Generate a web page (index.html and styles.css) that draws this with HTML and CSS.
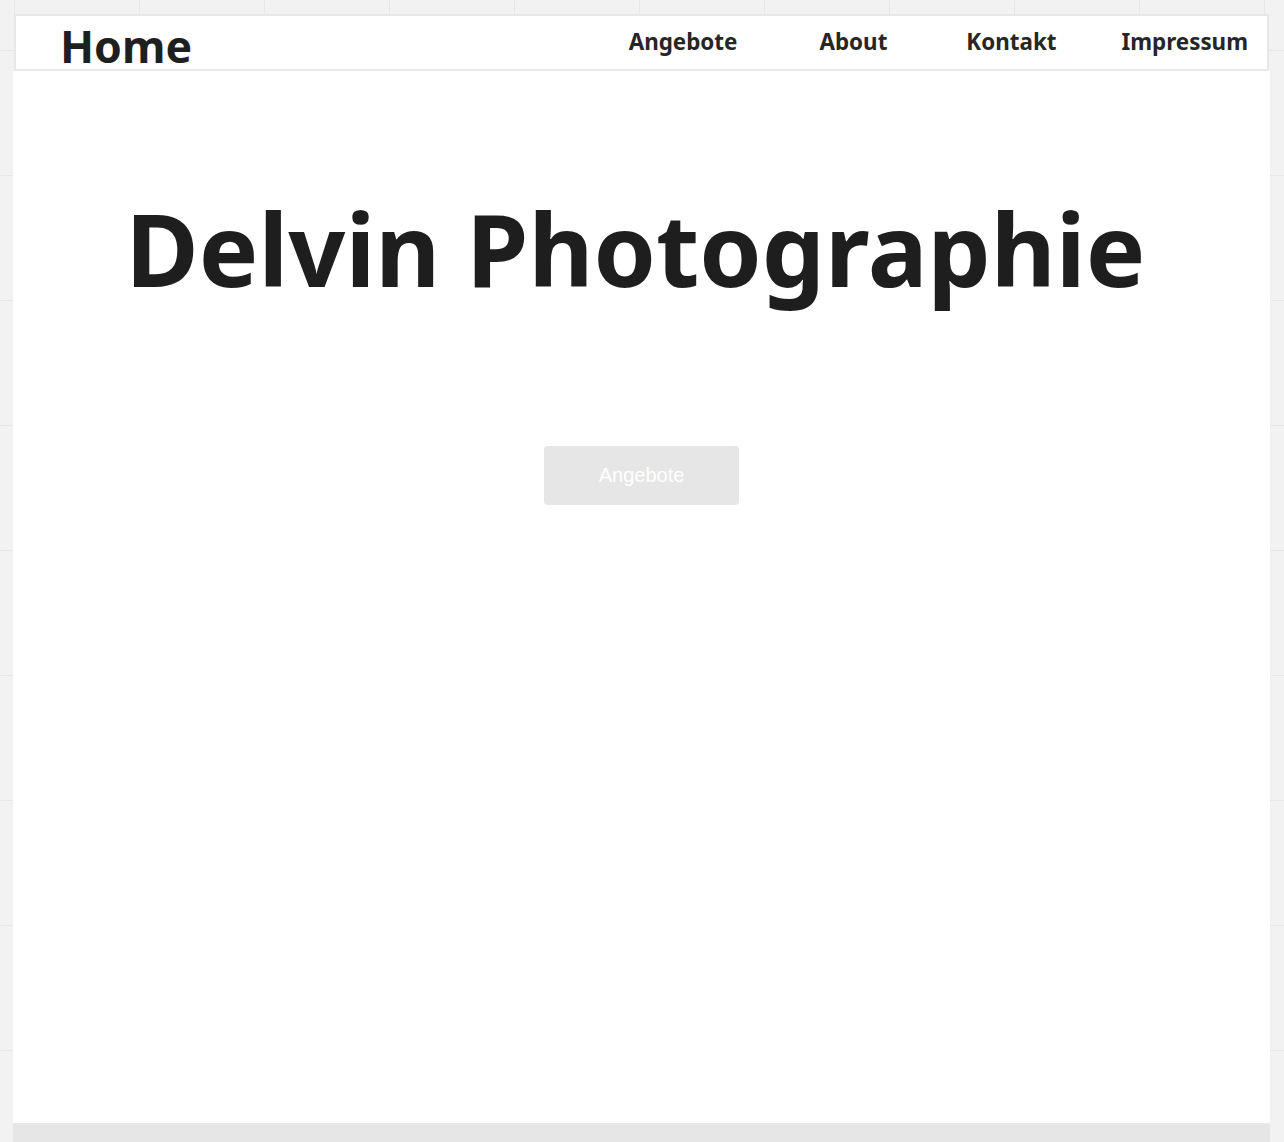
FILE: index.html
```html
<!DOCTYPE html>
<html lang="de">
<head>
<meta charset="utf-8">
<title>Delvin Photographie</title>
<link rel="stylesheet" href="styles.css">
</head>
<body>
<div class="frame">
  <header class="topbar">
    <a class="brand" href="#">Home</a>
    <nav class="nav">
      <a class="nav-link" href="#">Angebote</a>
      <a class="nav-link nav-about" href="#">About</a>
      <a class="nav-link nav-kontakt" href="#">Kontakt</a>
      <a class="nav-link nav-impressum" href="#">Impressum</a>
    </nav>
  </header>
  <main class="hero">
    <h1 class="title">Delvin Photographie</h1>
    <a class="cta" href="#">Angebote</a>
  </main>
  <div class="bottom-band"></div>
</div>
</body>
</html>
```

FILE: styles.css
```css
html, body {
  margin: 0;
  padding: 0;
}

body {
  height: 1142px;
  overflow: hidden;
  background-color: #f2f2f2;
  background-image:
    linear-gradient(to right, #e7e7e7 1px, transparent 1px),
    linear-gradient(to bottom, #e7e7e7 1px, transparent 1px);
  background-size: 125px 125px;
  background-position: 14px 50px;
  font-family: "Noto Sans", "Open Sans", sans-serif;
  color: #1f1f1f;
}

a {
  text-decoration: none;
  color: inherit;
}

.frame {
  margin-left: 13px;
  padding-top: 14px;
  width: 1257px;
  display: flex;
  flex-direction: column;
}

.topbar {
  box-sizing: border-box;
  height: 57px;
  margin-left: 1px;
  margin-right: 1px;
  background: #ffffff;
  border: 2px solid #e8e8e8;
  display: flex;
  align-items: flex-start;
  padding-left: 44px;
  padding-right: 19px;
}

.brand {
  font-size: 44.6px;
  font-weight: 700;
  line-height: 44px;
  margin-top: 8px;
  color: #1f1f1f;
}

.nav {
  margin-left: auto;
  display: flex;
  margin-top: 15px;
}

.nav-link {
  font-size: 22.4px;
  font-weight: 700;
  line-height: 22px;
  color: #262626;
}

.nav-about {
  margin-left: 82px;
}

.nav-kontakt {
  margin-left: 79px;
}

.nav-impressum {
  margin-left: 65px;
}

.hero {
  background: #ffffff;
  height: 1052px;
  box-sizing: border-box;
  padding-top: 127px;
  display: flex;
  flex-direction: column;
  align-items: center;
}

.title {
  margin: 0;
  padding-right: 12px;
  font-size: 100px;
  font-weight: 700;
  line-height: 100px;
  color: #1e1e1e;
}

.cta {
  margin-top: 148px;
  width: 195px;
  height: 59px;
  box-sizing: border-box;
  background: #e6e6e6;
  border-radius: 4px;
  color: #ffffff;
  font-family: "Liberation Sans", Arial, sans-serif;
  font-size: 20px;
  display: flex;
  align-items: center;
  justify-content: center;
}

.bottom-band {
  height: 19px;
  background: #e6e6e6;
}
```
